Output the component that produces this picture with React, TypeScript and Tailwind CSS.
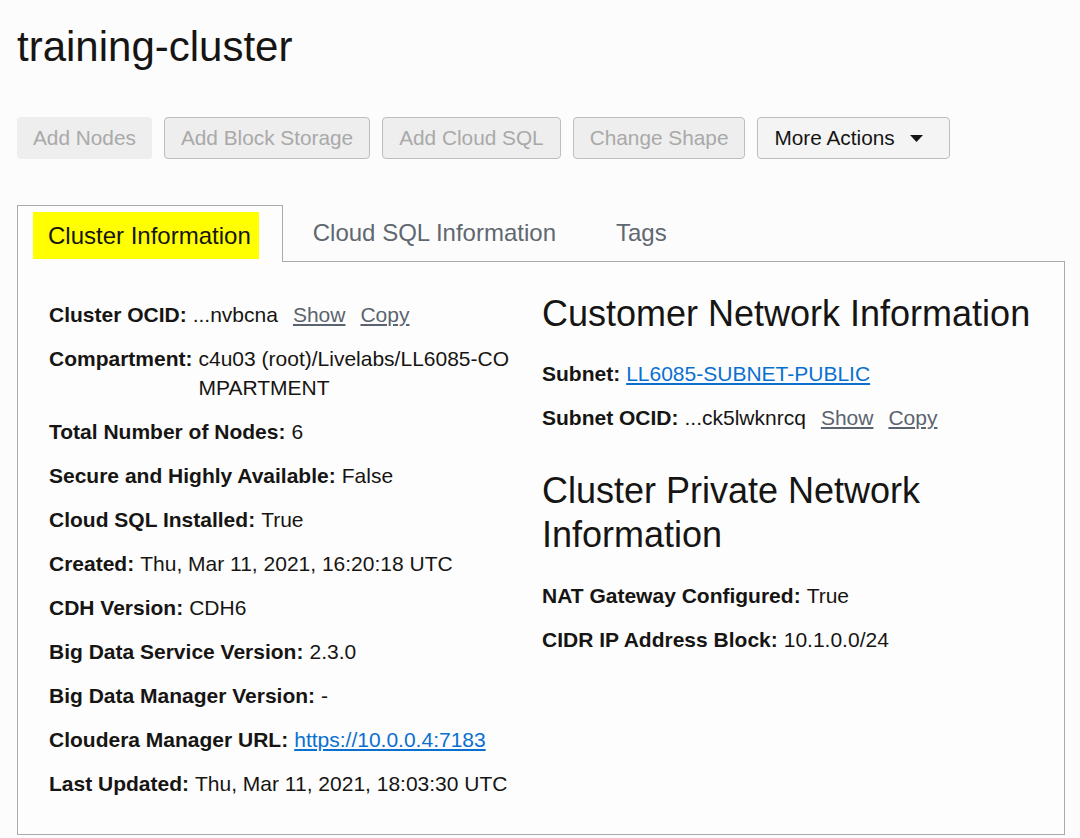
import React from "react";

const FONT = { fontFamily: '"Liberation Sans", Arial, Helvetica, sans-serif' };

type Item = { label: string; value?: React.ReactNode };

function Row({ label, value }: Item) {
  return (
    <div className="flex text-[21px] leading-[29px] text-[#161513]">
      <span className="font-bold whitespace-nowrap pr-[6px] shrink-0">{label}</span>
      <span className="break-all">{value}</span>
    </div>
  );
}

function OcidValue({ short }: { short: string }) {
  return (
    <span className="whitespace-nowrap">
      {short}
      <a href="#" className="ml-[15px] text-[#5b646e] underline underline-offset-2">Show</a>
      <a href="#" className="ml-[15px] text-[#5b646e] underline underline-offset-2">Copy</a>
    </span>
  );
}

function BlueLink({ children }: { children: React.ReactNode }) {
  return (
    <a href="#" className="text-[#0a70d0] underline underline-offset-2 decoration-[1.5px]">
      {children}
    </a>
  );
}

const clusterInfo: Item[] = [
  { label: "Cluster OCID:", value: <OcidValue short="...nvbcna" /> },
  { label: "Compartment:", value: "c4u03 (root)/Livelabs/LL6085-COMPARTMENT" },
  { label: "Total Number of Nodes:", value: "6" },
  { label: "Secure and Highly Available:", value: "False" },
  { label: "Cloud SQL Installed:", value: "True" },
  { label: "Created:", value: "Thu, Mar 11, 2021, 16:20:18 UTC" },
  { label: "CDH Version:", value: "CDH6" },
  { label: "Big Data Service Version:", value: "2.3.0" },
  { label: "Big Data Manager Version:", value: "-" },
  { label: "Cloudera Manager URL:", value: <BlueLink>https://10.0.0.4:7183</BlueLink> },
  { label: "Last Updated:", value: "Thu, Mar 11, 2021, 18:03:30 UTC" },
];

function ActionButton({ children, bordered = true }: { children: React.ReactNode; bordered?: boolean }) {
  return (
    <button
      disabled
      className={
        "h-[42px] px-[16px] rounded-[4px] bg-[#eeeeee] text-[20.8px] text-[#a9a9a9] " +
        (bordered ? "border border-[#bdbdbd] px-[15px]" : "")
      }
    >
      {children}
    </button>
  );
}

export default function App() {
  return (
    <div className="min-h-screen bg-[#fcfcfc] pl-[17px] pt-[23px] pb-[2px]" style={FONT}>
      <h1 className="text-[42px] leading-[48px] text-[#161513]">training-cluster</h1>

      {/* Action bar */}
      <div className="mt-[46px] flex items-center gap-[12px]">
        <ActionButton bordered={false}>Add Nodes</ActionButton>
        <ActionButton>Add Block Storage</ActionButton>
        <ActionButton>Add Cloud SQL</ActionButton>
        <ActionButton>Change Shape</ActionButton>
        <button className="h-[42px] pl-[16px] pr-[26px] flex items-center gap-[15px] rounded-[4px] border border-[#bdbdbd] bg-[#f4f4f4] text-[20.8px] text-[#161513]">
          More Actions
          <svg width="13" height="7" viewBox="0 0 13 7">
            <path d="M0 0 L13 0 L6.5 7 Z" fill="#161513" />
          </svg>
        </button>
      </div>

      {/* Tabs */}
      <div className="mt-[46px] w-[1048px]">
        <div className="flex items-end">
          <div className="relative z-10 -mb-px h-[57px] border border-b-0 border-[#aaaaaa] bg-[#fdfdfd] pl-[15px] pr-[23px] pt-[6px]">
            <span className="flex h-[47px] items-center bg-[#ffff00] pl-[15px] pr-[8px] text-[24px] text-[#161513]">
              Cluster Information
            </span>
          </div>
          <div className="flex h-[56px] items-center pl-[30px] pr-[30px] text-[24px] text-[#5f6770]">
            Cloud SQL Information
          </div>
          <div className="flex h-[56px] items-center pl-[30px] pr-[30px] text-[24px] text-[#5f6770]">
            Tags
          </div>
        </div>

        <div className="border border-[#aaaaaa] bg-[#fdfdfd] pl-[31px] pt-[30px] pb-[36px] flex">
          <div className="w-[476px] pt-[8px] flex flex-col gap-[15px]">
            {clusterInfo.map((it) => (
              <Row key={it.label} label={it.label} value={it.value} />
            ))}
          </div>

          <div className="ml-[17px] w-[500px] flex flex-col">
            <h2 className="text-[36px] leading-[44px] text-[#161513]">Customer Network Information</h2>
            <div className="mt-[23px] flex flex-col gap-[15px]">
              <Row label="Subnet:" value={<BlueLink>LL6085-SUBNET-PUBLIC</BlueLink>} />
              <Row label="Subnet OCID:" value={<OcidValue short="...ck5lwknrcq" />} />
            </div>
            <h2 className="mt-[37px] w-[480px] text-[36px] leading-[44px] text-[#161513]">
              Cluster Private Network Information
            </h2>
            <div className="mt-[24px] flex flex-col gap-[15px]">
              <Row label="NAT Gateway Configured:" value="True" />
              <Row label="CIDR IP Address Block:" value="10.1.0.0/24" />
            </div>
          </div>
        </div>
      </div>
    </div>
  );
}
